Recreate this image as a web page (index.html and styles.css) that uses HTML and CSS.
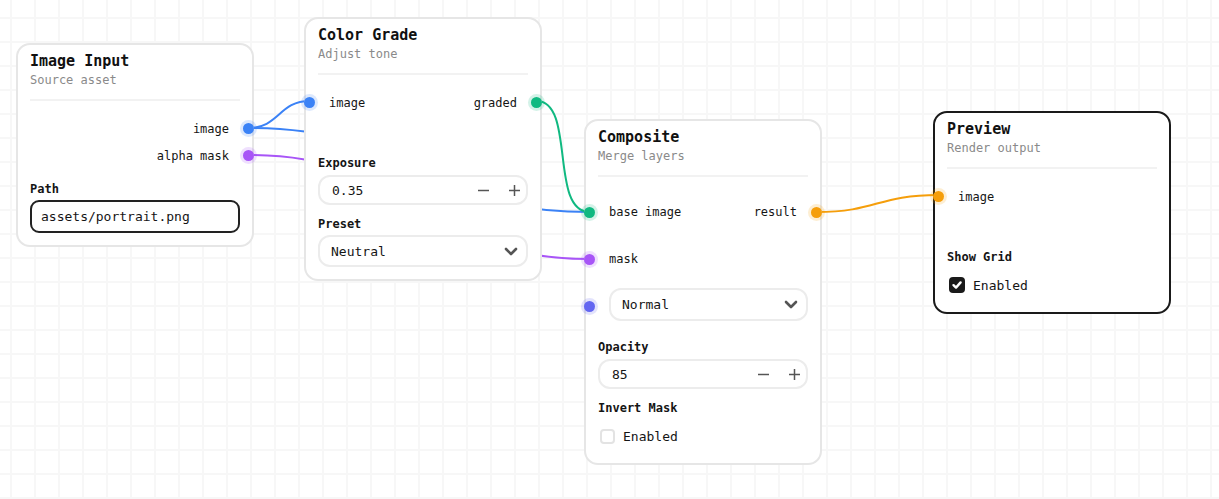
FILE: index.html
```html
<!DOCTYPE html>
<html lang="en">
<head>
  <meta charset="UTF-8">
  <title>Node Graph</title>
  <link rel="stylesheet" href="styles.css">
</head>
<body>

  <div class="canvas">

    <svg class="edges" width="1219" height="499" viewBox="0 0 1219 499">
      <path class="edge blue" d="M248.5 128 C 279 128, 279 101, 309.5 101"/>
      <path class="edge blue" d="M248.5 128 C 419 128, 419 212, 589.5 212"/>
      <path class="edge purple" d="M248.5 155 C 419 155, 419 259, 589.5 259"/>
      <path class="edge green" d="M536.5 101 C 576 101, 549 212, 589.5 212"/>
      <path class="edge orange" d="M816.5 212 C 877 212, 877 195, 938.5 195"/>
    </svg>

    <!-- source -->
    <div class="node node-input">
      <div class="node-head">
        <div class="node-title">Image Input</div>
        <div class="node-sub">Source asset</div>
      </div>
      <div class="ports">
        <div class="port-row">
          <span class="port-label out">image</span>
          <span class="port port-out blue"></span>
        </div>
        <div class="port-row">
          <span class="port-label out">alpha mask</span>
          <span class="port port-out purple"></span>
        </div>
      </div>
      <div class="field">
        <div class="field-label">Path</div>
        <div class="text-input">assets/portrait.png</div>
      </div>
    </div>

    <!-- grade -->
    <div class="node node-grade">
      <div class="node-head">
        <div class="node-title">Color Grade</div>
        <div class="node-sub">Adjust tone</div>
      </div>
      <div class="ports">
        <div class="port-row">
          <span class="port port-in blue"></span>
          <span class="port-label">image</span>
          <span class="port-label out">graded</span>
          <span class="port port-out green"></span>
        </div>
      </div>
      <div class="field">
        <div class="field-label">Exposure</div>
        <div class="stepper">
          <span class="stepper-value">0.35</span>
          <span class="stepper-btn">
            <svg width="13" height="13" viewBox="0 0 13 13"><path d="M1 6.5 H12"/></svg>
          </span>
          <span class="stepper-btn">
            <svg width="13" height="13" viewBox="0 0 13 13"><path d="M1 6.5 H12 M6.5 1 V12"/></svg>
          </span>
        </div>
      </div>
      <div class="field">
        <div class="field-label">Preset</div>
        <div class="select">
          <span>Neutral</span>
          <svg class="chevron" width="14" height="9" viewBox="0 0 14 9"><path d="M2 2 L7 7 L12 2"/></svg>
        </div>
      </div>
    </div>

    <!-- composite -->
    <div class="node node-comp">
      <div class="node-head">
        <div class="node-title">Composite</div>
        <div class="node-sub">Merge layers</div>
      </div>
      <div class="ports tall">
        <div class="port-row">
          <span class="port port-in green"></span>
          <span class="port-label">base image</span>
          <span class="port-label out">result</span>
          <span class="port port-out orange"></span>
        </div>
        <div class="port-row">
          <span class="port port-in purple"></span>
          <span class="port-label">mask</span>
        </div>
        <div class="port-row">
          <span class="port port-in indigo"></span>
          <div class="select grow">
            <span>Normal</span>
            <svg class="chevron" width="14" height="9" viewBox="0 0 14 9"><path d="M2 2 L7 7 L12 2"/></svg>
          </div>
        </div>
      </div>
      <div class="field">
        <div class="field-label">Opacity</div>
        <div class="stepper">
          <span class="stepper-value">85</span>
          <span class="stepper-btn">
            <svg width="13" height="13" viewBox="0 0 13 13"><path d="M1 6.5 H12"/></svg>
          </span>
          <span class="stepper-btn">
            <svg width="13" height="13" viewBox="0 0 13 13"><path d="M1 6.5 H12 M6.5 1 V12"/></svg>
          </span>
        </div>
      </div>
      <div class="field">
        <div class="field-label">Invert Mask</div>
        <label class="check-row">
          <span class="check"></span>
          <span>Enabled</span>
        </label>
      </div>
    </div>

    <!-- output, selected -->
    <div class="node node-preview selected">
      <div class="node-head">
        <div class="node-title">Preview</div>
        <div class="node-sub">Render output</div>
      </div>
      <div class="ports">
        <div class="port-row">
          <span class="port port-in orange"></span>
          <span class="port-label">image</span>
        </div>
      </div>
      <div class="field">
        <div class="field-label">Show Grid</div>
        <label class="check-row">
          <span class="check on">
            <svg width="12" height="12" viewBox="0 0 12 12"><path d="M2.5 6.2 L5 8.6 L9.6 3.4"/></svg>
          </span>
          <span>Enabled</span>
        </label>
      </div>
    </div>

  </div>

</body>
</html>
```

FILE: styles.css
```css
html, body {
  padding: 0;
  margin: 0;
  height: 100%;
  overflow: hidden;
}
body {
  font-family: "DejaVu Sans Mono", "Liberation Mono", monospace;
  color: #151515;
  background: #fff;
}
.canvas {
  position: relative;
  width: 100%;
  height: 100%;
  background-color: #fff;
  background-image:
    linear-gradient(to right, #f7f7f7 2px, transparent 2px),
    linear-gradient(to bottom, #f7f7f7 2px, transparent 2px);
  background-size: 24px 24px;
  background-position: 10px 17px;
}
.edges {
  position: absolute;
  top: 0;
  left: 0;
}
.edge {
  fill: none;
  stroke-width: 2;
}
.edge.blue   { stroke: #3b82f6; }
.edge.purple { stroke: #a855f7; }
.edge.green  { stroke: #10b981; }
.edge.orange { stroke: #f59e0b; }

/* nodes */
.node {
  position: absolute;
  box-sizing: border-box;
  width: 238px;
  padding: 6px 12px 12px;
  background: #fff;
  border: 2px solid #e6e6e6;
  border-radius: 14px;
}
.node.selected {
  border-color: #1a1a1a;
}
.node-input   { left: 16px;  top: 43px; }
.node-grade   { left: 304px; top: 17px; }
.node-comp    { left: 584px; top: 119px; }
.node-preview { left: 933px; top: 111px; }

.node-head {
  padding-bottom: 11px;
  border-bottom: 2px solid #f2f2f2;
}
.node-title {
  font-size: 15px;
  font-weight: bold;
  line-height: 20px;
  color: #111;
}
.node-sub {
  margin-top: 1px;
  font-size: 12px;
  line-height: 16px;
  color: #8a8a8a;
}

/* ports */
.ports {
  padding-top: 14px;
  min-height: 54px;
}
.ports.tall {
  display: flex;
  flex-direction: column;
  gap: 5px;
}
.port-row {
  position: relative;
  display: flex;
  align-items: center;
  height: 27px;
  margin: 0 -12px;
  padding: 0 23px;
  font-size: 12px;
  line-height: 16px;
}
.ports.tall .port-row {
  height: 42px;
  padding-right: 12px;
}
.port-label.out {
  margin-left: auto;
}
.ports.tall .port-label.out {
  margin-right: 11px;
}
.port {
  position: absolute;
  top: 50%;
  width: 11px;
  height: 11px;
  margin-top: -5.5px;
  border-radius: 50%;
}
.port-in  { left: -2px; }
.port-out { right: -2px; }
.port.blue   { background: #3b82f6; box-shadow: 0 0 0 3px rgba(59, 130, 246, 0.18); }
.port.purple { background: #a855f7; box-shadow: 0 0 0 3px rgba(168, 85, 247, 0.18); }
.port.green  { background: #10b981; box-shadow: 0 0 0 3px rgba(16, 185, 129, 0.18); }
.port.orange { background: #f59e0b; box-shadow: 0 0 0 3px rgba(245, 158, 11, 0.18); }
.port.indigo { background: #6366f1; box-shadow: 0 0 0 3px rgba(99, 102, 241, 0.18); }

/* fields */
.field {
  margin-top: 12px;
}
.field + .field {
  margin-top: 11px;
}
.field-label {
  font-size: 12px;
  font-weight: bold;
  line-height: 16px;
  color: #151515;
}
.text-input {
  box-sizing: border-box;
  height: 33px;
  margin-top: 3px;
  padding: 0 9px;
  border: 2px solid #222;
  border-radius: 9px;
  font-size: 13px;
  line-height: 29px;
}
.stepper {
  box-sizing: border-box;
  display: flex;
  align-items: center;
  gap: 11px;
  height: 30px;
  margin-top: 4px;
  padding: 0 2px 0 12px;
  border: 2px solid #ececec;
  border-radius: 12px;
  font-size: 13px;
}
.stepper-value {
  flex: 1;
}
.stepper-btn {
  display: flex;
  align-items: center;
  justify-content: center;
  width: 20px;
  height: 22px;
}
.stepper-btn path {
  fill: none;
  stroke: #555;
  stroke-width: 1.5;
}
.select {
  box-sizing: border-box;
  display: flex;
  align-items: center;
  justify-content: space-between;
  height: 32px;
  margin-top: 3px;
  padding: 0 8px 0 11px;
  border: 2px solid #ececec;
  border-radius: 12px;
  font-size: 13px;
  color: #151515;
}
.select.grow {
  flex: 1;
  height: 33px;
  margin-top: -3px;
}
.chevron path {
  fill: none;
  stroke: #555;
  stroke-width: 2.6;
  stroke-linecap: round;
  stroke-linejoin: round;
}
.check-row {
  display: flex;
  align-items: center;
  gap: 8px;
  height: 30px;
  margin-top: 5px;
  padding-left: 2px;
  font-size: 13px;
}
.check {
  box-sizing: border-box;
  display: flex;
  align-items: center;
  justify-content: center;
  width: 15px;
  height: 15px;
  border: 2px solid #e3e3e3;
  border-radius: 4px;
  background: #fff;
}
.check.on {
  width: 16px;
  height: 16px;
  border: none;
  background: #1a1a1a;
}
.check.on path {
  fill: none;
  stroke: #fff;
  stroke-width: 2.4;
  stroke-linecap: round;
  stroke-linejoin: round;
}
```
